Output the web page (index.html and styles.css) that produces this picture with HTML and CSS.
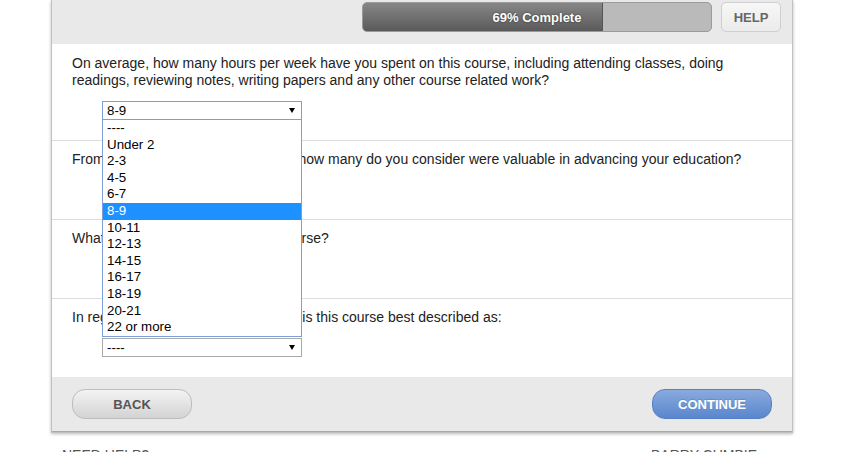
FILE: index.html
```html
<!DOCTYPE html>
<html lang="en">
<head>
<meta charset="utf-8">
<title>Course Survey</title>
<link rel="stylesheet" href="styles.css">
</head>
<body>
<div class="page">
  <div class="card">
    <div class="header">
      <div class="progress">
        <div class="fill" style="width:69%"></div>
        <span class="label">69% Complete</span>
      </div>
      <button class="help">HELP</button>
    </div>

    <div class="questions">
      <div class="q">
        <p class="qtext">On average, how many hours per week have you spent on this course, including attending classes, doing readings, reviewing notes, writing papers and any other course related work?</p>
        <div class="select-wrap">
          <div class="select focused"><span>8-9</span><i class="arrow"></i></div>
          <ul class="listbox">
            <li>----</li>
            <li>Under 2</li>
            <li>2-3</li>
            <li>4-5</li>
            <li>6-7</li>
            <li class="selected">8-9</li>
            <li>10-11</li>
            <li>12-13</li>
            <li>14-15</li>
            <li>16-17</li>
            <li>18-19</li>
            <li>20-21</li>
            <li>22 or more</li>
          </ul>
        </div>
      </div>

      <div class="q">
        <p class="qtext">From the classes that you attended, how many do you consider were valuable in advancing your education?</p>
        <div class="select-wrap">
          <div class="select"><span>----</span><i class="arrow"></i></div>
        </div>
      </div>

      <div class="q">
        <p class="qtext">What is your overall rating of this course?</p>
        <div class="select-wrap">
          <div class="select"><span>----</span><i class="arrow"></i></div>
        </div>
      </div>

      <div class="q">
        <p class="qtext">In regard to other courses you know, is this course best described as:</p>
        <div class="select-wrap">
          <div class="select"><span>----</span><i class="arrow"></i></div>
        </div>
      </div>
    </div>

    <div class="footer">
      <button class="btn back">BACK</button>
      <button class="btn continue">CONTINUE</button>
    </div>
  </div>

  <div class="links">
    <span>NEED HELP?</span>
    <span>BARRY CUMBIE</span>
  </div>
</div>
</body>
</html>
```

FILE: styles.css
```css
* { box-sizing: border-box; }

html, body {
  margin: 0;
  padding: 0;
  background: #ffffff;
}

body {
  font-family: "Liberation Sans", Arial, sans-serif;
  font-size: 14px;
  line-height: 17px;
  color: #222222;
}

.page {
  width: 742px;
  margin: 0 59px 0 51px;
}

.card {
  background: #ffffff;
  border: 1px solid #c2c2c2;
  border-top: 0;
  box-shadow: 0 1px 3px rgba(0, 0, 0, 0.28);
}

/* Header */
.header {
  background: #e9e9e9;
  height: 44px;
  padding: 2px 11px 0 0;
  display: flex;
  justify-content: flex-end;
  align-items: flex-start;
  gap: 9px;
}

.progress {
  width: 350px;
  height: 30px;
  display: grid;
  border: 1px solid #9a9a9a;
  border-radius: 5px;
  background: #bababa;
  overflow: hidden;
}

.progress .fill,
.progress .label {
  grid-area: 1 / 1;
}

.progress .fill {
  height: 100%;
  justify-self: start;
  background: linear-gradient(#878787, #5a5a5a);
  border-right: 1px solid #555;
}

.progress .label {
  align-self: center;
  justify-self: center;
  color: #ffffff;
  font-weight: bold;
  font-size: 13px;
  text-shadow: 0 0 2px rgba(0, 0, 0, 0.6);
}

.help {
  width: 60px;
  height: 30px;
  margin: 0;
  padding: 0;
  border: 1px solid #cfcfcf;
  border-radius: 5px;
  background: linear-gradient(#f7f7f7, #ebebeb);
  color: #666666;
  font-family: "Liberation Sans", Arial, sans-serif;
  font-weight: bold;
  font-size: 13px;
}

/* Questions */
.q {
  padding: 10px 20px 20px;
}

.q:first-child {
  padding-top: 11px;
}

.q + .q {
  border-top: 1px solid #dddddd;
}

.qtext {
  margin: 0 0 12px;
}

.select-wrap {
  position: relative;
  width: 200px;
  margin-left: 30px;
}

.select {
  width: 200px;
  height: 19px;
  border: 1px solid #a9a9a9;
  background: #ffffff;
  padding: 0 6px 0 4px;
  display: flex;
  align-items: center;
  justify-content: space-between;
  font-size: 13.33px;
  color: #000000;
}

.select.focused {
  border-color: #7d9ed8;
}

.arrow {
  width: 0;
  height: 0;
  border-left: 3.5px solid transparent;
  border-right: 3.5px solid transparent;
  border-top: 5px solid #000000;
}

.listbox {
  position: absolute;
  top: 100%;
  left: 0;
  z-index: 5;
  width: 200px;
  margin: 0;
  padding: 0;
  list-style: none;
  background: #ffffff;
  border: 1px solid #7d9ed8;
  border-top: 0;
}

.listbox li {
  height: 16.6px;
  line-height: 16.6px;
  padding-left: 4px;
  font-size: 13.33px;
  color: #000000;
}

.listbox li.selected {
  background: #1e90ff;
  color: #ffffff;
}

/* Footer */
.footer {
  background: #e9e9e9;
  padding: 12px 20px;
  display: flex;
  justify-content: space-between;
  align-items: center;
  border-bottom: 1px solid #a8a8a8;
}

.btn {
  width: 120px;
  height: 30px;
  margin: 0;
  padding: 0;
  border-radius: 13px;
  font-family: "Liberation Sans", Arial, sans-serif;
  font-weight: bold;
  font-size: 13px;
}

.btn.back {
  border: 1px solid #bdbdbd;
  background: linear-gradient(#f3f3f3, #d3d3d3);
  color: #555555;
}

.btn.continue {
  border: 1px solid #5681c8;
  background: linear-gradient(#89aadd, #5a86cd);
  color: #ffffff;
  text-shadow: 0 -1px 0 rgba(0, 0, 0, 0.15);
}

/* Links below card */
.links {
  margin-top: 14px;
  padding-left: 11px;
  display: grid;
  grid-template-columns: 589px auto;
  color: #555555;
  font-size: 14px;
}
```
